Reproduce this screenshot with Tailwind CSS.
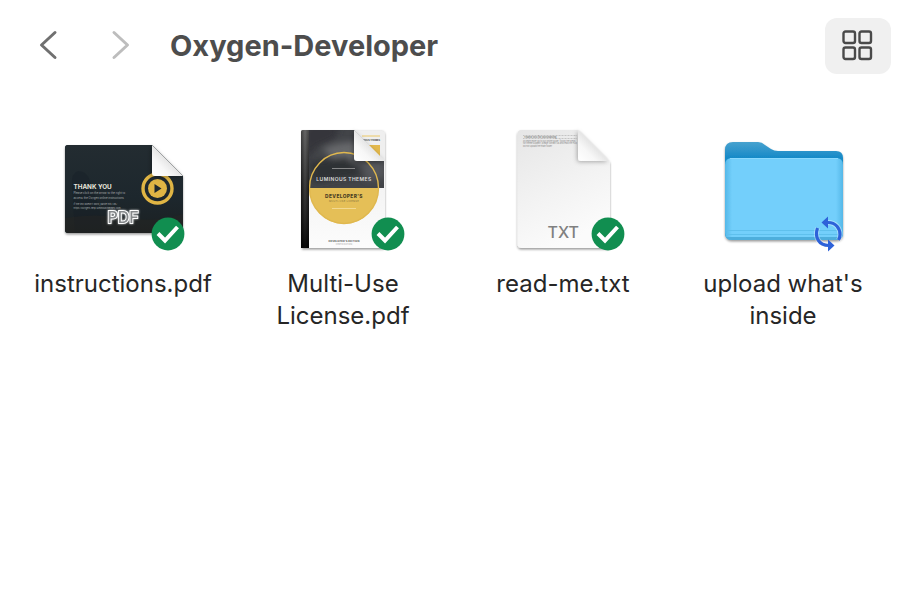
<!DOCTYPE html>
<html lang="en">
<head>
    <meta charset="UTF-8">
    <meta name="viewport" content="width=device-width, initial-scale=1.0">
    <title>Oxygen-Developer</title>
    <script src="https://cdn.jsdelivr.net/npm/@tailwindcss/browser@4"></script>
</head>
<body class="bg-white min-h-screen font-['Inter',sans-serif] text-[#262626]">
    <header class="flex items-center h-[92px] pl-8 pr-[15px]">
        <button class="w-8 h-10 flex items-center justify-center" aria-label="Back">
            <svg class="w-6 h-8" viewBox="0 0 24 32" fill="none" stroke="#707070" stroke-width="3" stroke-linecap="round" stroke-linejoin="round"><path d="M19 2.500 5.500 15 19 27.500"/></svg>
        </button>
        <button class="w-8 h-10 ml-[41px] flex items-center justify-center" aria-label="Forward" disabled>
            <svg class="w-6 h-8" viewBox="0 0 24 32" fill="none" stroke="#bdbdbd" stroke-width="3" stroke-linecap="round" stroke-linejoin="round"><path d="M5 2.500 18.500 15 5 27.500"/></svg>
        </button>
        <h1 class="ml-[33px] text-[29px] leading-9 font-bold text-[#4d4d4d]">Oxygen-Developer</h1>
        <button class="ml-auto w-[66px] h-14 rounded-xl bg-[#f0f0f0] flex items-center justify-center" aria-label="Icon view">
            <svg class="w-8 h-8" viewBox="0 0 32 32" fill="none" stroke="#4a4a4a" stroke-width="2.400">
                <rect x="1.500" y="1.500" width="11.500" height="11.500" rx="2"/>
                <rect x="17.500" y="1.500" width="11.500" height="11.500" rx="2"/>
                <rect x="1.500" y="17.500" width="11.500" height="11.500" rx="2"/>
                <rect x="17.500" y="17.500" width="11.500" height="11.500" rx="2"/>
            </svg>
        </button>
    </header>

    <main class="grid grid-cols-4 px-[13px] pt-7 text-2xl leading-8 text-center">
        <figure class="flex flex-col items-center">
            <svg class="w-[136px] h-[136px]" viewBox="55 120 136 136" font-family="Inter, sans-serif">
                <defs>
                    <filter id="shadow" x="-10%" y="-10%" width="120%" height="125%"><feDropShadow dx="0" dy="1.500" stdDeviation="1.200" flood-opacity=".4"/></filter>
                    <filter id="foldShadow" x="-30%" y="-30%" width="160%" height="160%"><feDropShadow dx="-1" dy="1" stdDeviation="2" flood-opacity=".3"/></filter>
                    <filter id="glow" x="-20%" y="-30%" width="140%" height="160%"><feDropShadow dx="0" dy="0" stdDeviation="1" flood-color="#fff" flood-opacity=".8"/></filter>
                    <linearGradient id="fold" x1="0" y1="1" x2=".6" y2=".4"><stop offset="0" stop-color="#fff"/><stop offset=".5" stop-color="#f7f7f7"/><stop offset="1" stop-color="#dcdcdc"/></linearGradient>
                    <linearGradient id="night" x1="0" y1="0" x2="0" y2="1"><stop offset="0" stop-color="#232c31"/><stop offset=".6" stop-color="#1d272d"/><stop offset="1" stop-color="#1b2022"/></linearGradient>
                    <clipPath id="slide"><path d="M68 145h84l31 31v54q0 3-3 3H68q-3 0-3-3v-82q0-3 3-3z"/></clipPath>
                </defs>
                <path filter="url(#shadow)" fill="#20292e" d="M68 145h84l31 31v54q0 3-3 3H68q-3 0-3-3v-82q0-3 3-3z"/>
                <g clip-path="url(#slide)">
                    <path fill="url(#night)" d="M65 145h118v88H65z"/>
                    <path fill="#151e25" opacity=".35" d="M72 185q-1-12 6-14 9 0 12 10l9 26 4 26H75z"/>
                    <path fill="#2b2922" opacity=".35" d="M65 218q30-5 60 0t58-4v19H65z"/>
                    <circle cx="157.500" cy="188.500" r="14.500" fill="none" stroke="#e0b544" stroke-width="3.400"/>
                    <circle cx="157.500" cy="188.500" r="9.500" fill="#e0b544"/>
                    <path d="M154.500 184v9l7-4.500z" fill="#20292e"/>
                </g>
                <path filter="url(#foldShadow)" fill="url(#fold)" d="M152 145v28q0 3 3 3h28z"/>
                <text x="73.500" y="188.500" font-size="6.300" font-weight="700" fill="#e8e5dc">THANK YOU</text>
                <g font-size="2.800" fill="#a8adaf">
                    <text x="73.500" y="194.300">Please click on the arrow to the right to</text>
                    <text x="73.500" y="198.500">access the Oxygen online instructions.</text>
                    <text x="73.500" y="205" font-size="2.400">If the link doesn't work, paste this URL:</text>
                    <text x="73.500" y="209" font-size="2.400">https://oxygen-help.luminousthemes.com</text>
                </g>
                <text x="107.500" y="222.500" font-size="16" font-weight="500" fill="#85888a" stroke="#fff" stroke-width="1.800" paint-order="stroke" filter="url(#glow)">PDF</text>
                <circle cx="168" cy="234" r="16.400" fill="#118e50"/>
                <path d="m158 233.500 7 7 12.500-13.500" fill="none" stroke="#fff" stroke-width="4"/>
            </svg>
            <figcaption class="mt-3 w-[190px]">instructions.pdf</figcaption>
        </figure>

        <figure class="flex flex-col items-center">
            <svg class="w-[136px] h-[136px]" viewBox="275 120 136 136" font-family="Inter, sans-serif">
                <defs>
                    <linearGradient id="spine"><stop offset="0" stop-color="#0a0a0a"/><stop offset=".5" stop-color="#555"/><stop offset="1" stop-color="#111"/></linearGradient>
                    <linearGradient id="spineFade" x1="0" y1="0" x2="0" y2="1"><stop offset="0" stop-color="#777" stop-opacity=".5"/><stop offset=".5" stop-color="#222" stop-opacity=".5"/><stop offset="1" stop-color="#000" stop-opacity=".9"/></linearGradient>
                    <linearGradient id="cover" x1="0" y1="0" x2="0" y2="1"><stop offset="0" stop-color="#ececec"/><stop offset="1" stop-color="#fcfcfc"/></linearGradient>
                    <filter id="smoke" x="-30%" y="-30%" width="160%" height="160%"><feGaussianBlur stdDeviation="3"/></filter>
                    <clipPath id="sky"><path d="M309 130h45l30 30v28h-75z"/></clipPath>
                </defs>
                <path filter="url(#shadow)" fill="url(#cover)" d="M302 130h79q4 0 4 4v111q0 3-3 3h-80z"/>
                <g clip-path="url(#sky)">
                    <path fill="#424448" d="M309 130h76v58h-76z"/>
                    <g filter="url(#smoke)">
                        <path fill="#34363a" d="M305 125h36l-6 14-18 8-12 14z"/>
                        <path fill="#66686b" d="M322 149q16-8 33-7l9 17-26 4z"/>
                        <path fill="#2f3135" d="M309 162l38-5 15 18-48 8z"/>
                        <path fill="#55575b" d="M361 162h24v16l-18 3z"/>
                    </g>
                </g>
                <path d="M309.500 188a34.500 36 0 0 0 69 0z" fill="#e5bf57"/>
                <ellipse cx="344" cy="188" rx="34.500" ry="35.500" fill="none" stroke="#e0b84e" stroke-width="1.400"/>
                <path fill="url(#spine)" d="M303 130h6v118h-8V132q0-2 2-2z"/>
                <path fill="url(#spineFade)" d="M303 130h6v118h-8V132q0-2 2-2z"/>
                <path fill="#efefef" d="M355 131h26q4 0 4 4v27z"/>
                <path stroke="#ecc969" d="M362 136h18"/>
                <path fill="#e3b84b" d="M368 145h12v13z"/>
                <text x="380" y="140.500" text-anchor="end" font-size="2.300" font-weight="700" fill="#444">LUMINOUS THEMES</text>
                <path filter="url(#foldShadow)" fill="url(#fold)" d="M354 130v28q0 3 3 3h28z"/>
                <g text-anchor="middle">
                    <path stroke="#aaa" stroke-width=".7" d="M332 168.500h23"/>
                    <text x="344" y="181" font-size="5" font-weight="600" letter-spacing=".4" fill="#ddd">LUMINOUS THEMES</text>
                    <text x="344" y="198.300" font-size="4.800" font-weight="800" letter-spacing=".4" fill="#4b4024">DEVELOPER'S</text>
                    <text x="344" y="202.300" font-size="2.500" letter-spacing=".3" fill="#82703a">MULTI-USE LICENSE</text>
                    <path stroke="#f5dfa0" stroke-width=".8" d="M332 208.500h24"/>
                    <text x="344" y="242" font-size="2.600" font-weight="700" letter-spacing=".1" fill="#555">DEVELOPER'S EDITION</text>
                    <text x="344" y="245.300" font-size="2.200" fill="#aaa">CERTIFICATION</text>
                </g>
                <circle cx="388" cy="234" r="16.400" fill="#118e50"/>
                <path d="m378 233.500 7 7 12.500-13.500" fill="none" stroke="#fff" stroke-width="4"/>
            </svg>
            <figcaption class="mt-3 w-[190px]">Multi-Use License.pdf</figcaption>
        </figure>

        <figure class="flex flex-col items-center">
            <svg class="w-[136px] h-[136px]" viewBox="495 120 136 136" font-family="Inter, sans-serif">
                <defs>
                    <linearGradient id="paper" x1="0" y1="0" x2=".4" y2="1"><stop offset="0" stop-color="#e6e6e6"/><stop offset=".6" stop-color="#f3f3f3"/><stop offset="1" stop-color="#fbfbfb"/></linearGradient>
                </defs>
                <path filter="url(#shadow)" fill="url(#paper)" d="M521.500 130H578l32 32v83q0 3-3 3h-85.500q-4 0-4-4V134q0-4 4-4z"/>
                <path stroke="#aaa" stroke-width=".6" stroke-dasharray="1 .5" d="M523 135.500h54M523 138.500h54"/>
                <g font-size="2.600" fill="#888">
                    <text x="524" y="138" font-weight="700">Thank you for purchasing</text>
                    <text x="523" y="141.500" font-size="2.100">To learn more go to our online guide, follow the steps</text>
                    <text x="523" y="144.300" font-size="2.100">for theme support, please contact us and read the FAQ</text>
                    <text x="523" y="147.100" font-size="2.100">Do not upload the main folder</text>
                </g>
                <path filter="url(#foldShadow)" fill="url(#fold)" d="M578 130v28q0 3 3 3h28z"/>
                <text x="547.500" y="238" font-size="16" font-weight="500" fill="#808080">TXT</text>
                <circle cx="608" cy="234" r="16.400" fill="#118e50"/>
                <path d="m598 233.500 7 7 12.500-13.500" fill="none" stroke="#fff" stroke-width="4"/>
            </svg>
            <figcaption class="mt-3 w-[190px]">read-me.txt</figcaption>
        </figure>

        <figure class="flex flex-col items-center">
            <svg class="w-[136px] h-[136px]" viewBox="715 120 136 136">
                <defs>
                    <linearGradient id="folderBack" x1="0" y1="0" x2="0" y2="1"><stop offset="0" stop-color="#48a2cf"/><stop offset=".15" stop-color="#198bc8"/><stop offset="1" stop-color="#0a7fbe"/></linearGradient>
                    <linearGradient id="folderEdge"><stop offset="0" stop-color="#55b8e8"/><stop offset=".06" stop-color="#73cffb"/><stop offset=".94" stop-color="#73cffb"/><stop offset="1" stop-color="#55b8e8"/></linearGradient>
                </defs>
                <path filter="url(#shadow)" fill="url(#folderBack)" d="M733 142h25q4 0 7 3l6 4q3 2 7 2h58q7 0 7 7v75q0 7-7 7H732q-7 0-7-7v-83q0-8 8-8z"/>
                <path fill="url(#folderEdge)" d="M732 158h104q7 0 7 7v68q0 7-7 7H732q-7 0-7-7v-68q0-7 7-7z"/>
                <path fill="none" stroke="#8bd9fd" d="M730 158.500h108"/>
                <path fill="none" stroke="#5fc0ed" d="M726 230.500h116M726 234.500h116"/>
                <path fill="#4eaedc" d="M726 237h116q-2 3-6 3H732q-4 0-6-3z"/>
                <g stroke="#fff" stroke-opacity=".4" stroke-width="5" fill="none"><path d="M828 222.500c8 0 12 6 12 12q0 3-1.500 5.500M817.500 228c-3 9 1 17.500 11.500 17.500"/></g>
                <g stroke="#2e62d9" stroke-width="3.200" fill="none"><path d="M828 222.500c8 0 12 6 12 12q0 3-1.500 5.500M817.500 228c-3 9 1 17.500 11.500 17.500"/></g>
                <path fill="#2e62d9" d="M821.500 222.500l6.500-6v12zM834.500 245.500l-6.500-6v12z"/>
            </svg>
            <figcaption class="mt-3 w-[190px]">upload what's inside</figcaption>
        </figure>
    </main>
</body>
</html>
